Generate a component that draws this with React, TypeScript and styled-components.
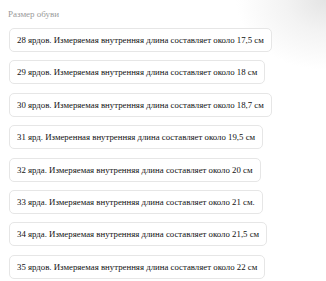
import React from "react";
import styled, { createGlobalStyle } from "styled-components";

const Global = createGlobalStyle`
  html, body { margin: 0; padding: 0; }
  body {
    font-family: "Liberation Serif", "Times New Roman", serif;
    background: radial-gradient(ellipse 90px 70px at 100% 0%, #e4e4e4 0%, #f3f3f3 45%, #ffffff 100%);
    min-height: 281px;
  }
`;

const Page = styled.div`
  padding: 8px 8px 0 8px;
  display: flex;
  flex-direction: column;
  align-items: flex-start;
`;

const Label = styled.div`
  font-size: 9px;
  line-height: 12px;
  color: #9a9a9a;
  margin-bottom: 8px;
`;

const List = styled.div`
  display: flex;
  flex-direction: column;
  align-items: flex-start;
  gap: 8.4px;
  padding-left: 1px;
`;

const Option = styled.button`
  font-family: "Liberation Serif", "Times New Roman", serif;
  font-size: 8.8px;
  line-height: 12px;
  color: #111;
  background: #fff;
  border: 1px solid #e6e6e6;
  border-radius: 5px;
  padding: 5px 7px 5px 7px;
  height: 24px;
  text-align: left;
  cursor: pointer;
  white-space: nowrap;
`;

const options = [
  "28 ярдов. Измеряемая внутренняя длина составляет около 17,5 см",
  "29 ярдов. Измеряемая внутренняя длина составляет около 18 см",
  "30 ярдов. Измеряемая внутренняя длина составляет около 18,7 см",
  "31 ярд. Измеренная внутренняя длина составляет около 19,5 см",
  "32 ярда. Измеряемая внутренняя длина составляет около 20 см",
  "33 ярда. Измеряемая внутренняя длина составляет около 21 см.",
  "34 ярда. Измеряемая внутренняя длина составляет около 21,5 см",
  "35 ярдов. Измеряемая внутренняя длина составляет около 22 см",
];

export default function App() {
  return (
    <>
      <Global />
      <Page>
        <Label>Размер обуви</Label>
        <List>
          {options.map((o) => (
            <Option key={o}>{o}</Option>
          ))}
        </List>
      </Page>
    </>
  );
}
